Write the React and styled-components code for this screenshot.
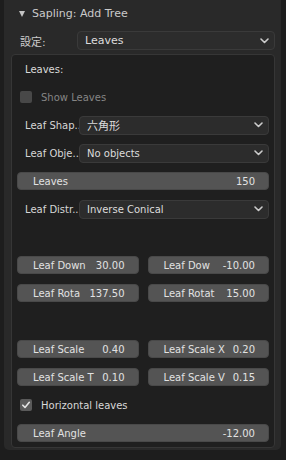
import React from "react"
import styled, { createGlobalStyle } from "styled-components"

const Global = createGlobalStyle`
    body {
        margin: 0;
        background: #1d1d1d;
        font-family: "DejaVu Sans", "Noto Sans CJK JP", sans-serif;
        font-size: 10px;
        color: #d6d6d6;
    }
`

const Panel = styled.div`
    margin: 0 5px 0 4px;
    width: 277px;
    height: 450px;
    box-sizing: border-box;
    background: #292929;
    border-radius: 0 0 5px 5px;
    padding: 0 6px 0 7px;
`

const Header = styled.div`
    height: 27px;
    display: flex;
    align-items: center;
    gap: 7px;
    padding-left: 8px;
    font-size: 11px;
    color: #cacaca;
`

const Triangle = styled.span`
    width: 0;
    height: 0;
    border-left: 3.5px solid transparent;
    border-right: 3.5px solid transparent;
    border-top: 6px solid #c4c4c4;
`

const SettingRow = styled.div`
    height: 27px;
    display: flex;
    align-items: center;
`

const SettingLabel = styled.div`
    width: 66px;
    flex: none;
    box-sizing: border-box;
    padding-left: 9px;
    font-size: 11px;
    color: #cccccc;
`

const Box = styled.div`
    border: 1px solid #363636;
    border-radius: 4px;
    background: #1f1f1f;
    padding: 0 5px;
    display: flex;
    flex-direction: column;
`

const Row = styled.div`
    height: 28px;
    display: flex;
    align-items: center;
`

const Title = styled.div`
    padding-left: 8px;
    color: #dadada;
`

const Check = styled.span`
    width: 12px;
    height: 12px;
    margin-left: 3px;
    margin-right: 9px;
    border-radius: 2px;
    background: #5a5a5a;
    opacity: ${p => (p.$dim ? 0.7 : 1)};
    display: flex;
    align-items: center;
    justify-content: center;
`

const CheckText = styled.span`
    color: ${p => (p.$dim ? "#858585" : "#d8d8d8")};
`

const Label = styled.div`
    width: 62px;
    flex: none;
    box-sizing: border-box;
    padding-left: 8px;
    white-space: nowrap;
    color: #d6d6d6;
`

const Select = styled.div`
    flex: 1;
    height: 19px;
    box-sizing: border-box;
    border: 1px solid #3a3a3a;
    border-radius: 4px;
    background: #2c2c2c;
    display: flex;
    align-items: center;
    justify-content: space-between;
    padding: 0 5px 0 7px;
    color: #dcdcdc;
    font-size: ${p => (p.$big ? "11px" : "10px")};
`

const Slider = styled.div`
    flex: 1;
    height: 18px;
    box-sizing: border-box;
    border: 1px solid #494949;
    border-radius: 4px;
    background: #545454;
    display: flex;
    align-items: center;
    justify-content: space-between;
    padding: 0 13px 0 15px;
    color: #e2e2e2;
    white-space: nowrap;
`

const Pair = styled.div`
    flex: 1;
    display: grid;
    grid-template-columns: 1fr 1fr;
    gap: 9px;
`

function Chevron() {
    return (
        <svg width="9" height="6" viewBox="0 0 9 6">
            <path d="M1 1 L4.5 4.5 L8 1" fill="none" stroke="#cccccc" strokeWidth="1.6" strokeLinecap="round" strokeLinejoin="round" />
        </svg>
    )
}

function Tick() {
    return (
        <svg width="10" height="10" viewBox="0 0 10 10">
            <path d="M1.8 5.2 L4 7.4 L8.3 2.3" fill="none" stroke="#e4e4e4" strokeWidth="1.6" strokeLinecap="round" strokeLinejoin="round" />
        </svg>
    )
}

const dropdowns = [
    { label: "Leaf Shap..", value: "六角形", big: true },
    { label: "Leaf Obje..", value: "No objects" },
]

const pairs = [
    [["Leaf Down", "30.00"], ["Leaf Dow", "-10.00"]],
    [["Leaf Rota", "137.50"], ["Leaf Rotat", "15.00"]],
    null,
    [["Leaf Scale", "0.40"], ["Leaf Scale X", "0.20"]],
    [["Leaf Scale T", "0.10"], ["Leaf Scale V", "0.15"]],
]

export default function App() {
    const pairRows = pairs.map((pair, i) => {
        if (!pair) return <Row key={"gap" + i} />
        return (
            <Row key={pair[0][0]}>
                <Pair>
                    {pair.map(([label, value]) => (
                        <Slider key={label}>
                            <span>{label}</span>
                            <span>{value}</span>
                        </Slider>
                    ))}
                </Pair>
            </Row>
        )
    })

    return (
        <>
            <Global />
            <Panel>
                <Header>
                    <Triangle />
                    <span>Sapling: Add Tree</span>
                </Header>
                <SettingRow>
                    <SettingLabel>設定:</SettingLabel>
                    <Select $big>
                        <span>Leaves</span>
                        <Chevron />
                    </Select>
                </SettingRow>
                <Box>
                    <Row>
                        <Title>Leaves:</Title>
                    </Row>
                    <Row>
                        <Check $dim />
                        <CheckText $dim>Show Leaves</CheckText>
                    </Row>
                    {dropdowns.map(d => (
                        <Row key={d.label}>
                            <Label>{d.label}</Label>
                            <Select $big={d.big}>
                                <span>{d.value}</span>
                                <Chevron />
                            </Select>
                        </Row>
                    ))}
                    <Row>
                        <Slider>
                            <span>Leaves</span>
                            <span>150</span>
                        </Slider>
                    </Row>
                    <Row>
                        <Label>Leaf Distr..</Label>
                        <Select>
                            <span>Inverse Conical</span>
                            <Chevron />
                        </Select>
                    </Row>
                    <Row />
                    {pairRows}
                    <Row>
                        <Check>
                            <Tick />
                        </Check>
                        <CheckText>Horizontal leaves</CheckText>
                    </Row>
                    <Row>
                        <Slider>
                            <span>Leaf Angle</span>
                            <span>-12.00</span>
                        </Slider>
                    </Row>
                </Box>
            </Panel>
        </>
    )
}
